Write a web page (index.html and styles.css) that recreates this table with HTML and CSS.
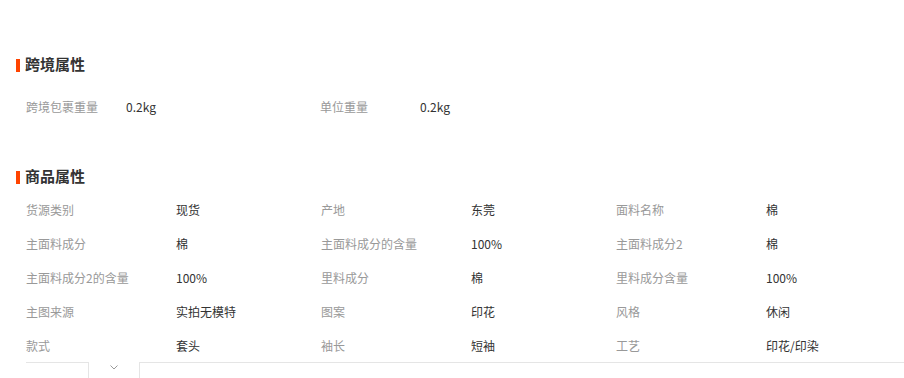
FILE: index.html
```html
<!DOCTYPE html>
<html lang="zh-CN">
<head>
<meta charset="utf-8">
<title>属性</title>
<link rel="stylesheet" href="styles.css">
</head>
<body>
<div class="page">
  <h3 class="title">跨境属性</h3>
  <div class="attrs attrs-cross">
    <div class="item"><span class="label">跨境包裹重量</span><span class="value">0.2kg</span></div>
    <div class="item"><span class="label">单位重量</span><span class="value">0.2kg</span></div>
  </div>

  <h3 class="title title-goods">商品属性</h3>
  <div class="attrs attrs-goods">
    <div class="item"><span class="label">货源类别</span><span class="value">现货</span></div>
    <div class="item"><span class="label">产地</span><span class="value">东莞</span></div>
    <div class="item"><span class="label">面料名称</span><span class="value">棉</span></div>
    <div class="item"><span class="label">主面料成分</span><span class="value">棉</span></div>
    <div class="item"><span class="label">主面料成分的含量</span><span class="value">100%</span></div>
    <div class="item"><span class="label">主面料成分2</span><span class="value">棉</span></div>
    <div class="item"><span class="label">主面料成分2的含量</span><span class="value">100%</span></div>
    <div class="item"><span class="label">里料成分</span><span class="value">棉</span></div>
    <div class="item"><span class="label">里料成分含量</span><span class="value">100%</span></div>
    <div class="item"><span class="label">主图来源</span><span class="value">实拍无模特</span></div>
    <div class="item"><span class="label">图案</span><span class="value">印花</span></div>
    <div class="item"><span class="label">风格</span><span class="value">休闲</span></div>
    <div class="item"><span class="label">款式</span><span class="value">套头</span></div>
    <div class="item"><span class="label">袖长</span><span class="value">短袖</span></div>
    <div class="item"><span class="label">工艺</span><span class="value">印花/印染</span></div>
  </div>

  <div class="fold">
    <div class="fold-line fold-left"></div>
    <div class="fold-tab">
      <svg class="chevron" width="8" height="5" viewBox="0 0 8 5"><polyline points="0.5,0.5 4,4 7.5,0.5" fill="none" stroke="#9a9a9a" stroke-width="1"/></svg>
    </div>
    <div class="fold-line fold-right"></div>
  </div>
</div>
</body>
</html>
```
FILE: styles.css
```css
html, body {
  margin: 0;
  padding: 0;
  background: #fff;
}
body {
  font-family: "Noto Sans CJK SC", "Liberation Sans", sans-serif;
  color: #333;
}
.page {
  padding: 54px 0 0 16px;
  height: 324px;
  overflow: hidden;
}
.title {
  margin: 0;
  display: flex;
  align-items: center;
  gap: 5px;
  height: 20px;
  line-height: 20px;
  font-size: 15px;
  font-weight: bold;
  color: #333;
}
.title::before {
  content: "";
  width: 4px;
  height: 13px;
  margin-top: 2px;
  background: #ff4400;
}
.title-goods {
  margin-top: 43px;
}
.attrs {
  display: grid;
  padding-left: 10px;
}
.attrs-cross {
  margin-top: 15px;
  grid-template-columns: repeat(2, 294px);
}
.attrs-goods {
  margin-top: 6px;
  grid-template-columns: repeat(3, 295px);
}
.item {
  display: flex;
  align-items: center;
  height: 34px;
  font-size: 12px;
  white-space: nowrap;
}
.label {
  color: #999;
  width: 150px;
  flex: none;
}
.attrs-cross .label {
  width: 100px;
}
.value {
  color: #333;
}
.fold {
  display: flex;
  margin: 0 0 0 10px;
  height: 20px;
}
.fold-line {
  border-top: 1px solid #e5e5e5;
}
.fold-left {
  width: 62px;
}
.fold-right {
  flex: 1;
}
.fold-tab {
  width: 50px;
  border-left: 1px solid #e5e5e5;
  border-right: 1px solid #e5e5e5;
  display: flex;
  justify-content: center;
  align-items: flex-start;
  padding-top: 3px;
}
.chevron {
  display: block;
}
```
